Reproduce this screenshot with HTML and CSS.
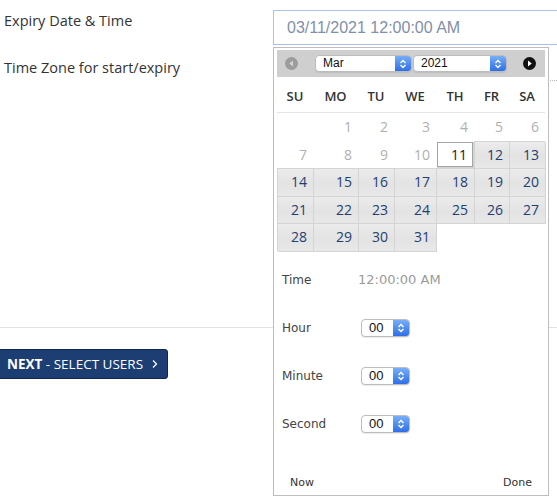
FILE: index.html
```html
<!DOCTYPE html>
<html>
<head>
<meta charset="utf-8">
<link rel="stylesheet" href="styles.css">
</head>
<body>
<div class="form">
  <div class="form-row row-expiry">
    <label class="lbl">Expiry Date &amp; Time</label>
    <div class="field"><input class="dt-input" type="text" value="03/11/2021 12:00:00 AM"></div>
  </div>
  <div class="form-row row-tz">
    <label class="lbl">Time Zone for start/expiry</label>
    <div class="field"><div class="tz-select"></div></div>
  </div>
</div>
<div class="divider"></div>
<div class="actions">
  <button class="next-btn"><b>NEXT</b> - SELECT USERS <svg class="chev" width="6" height="10" viewBox="0 0 6 10"><path d="M1 1.5 L4.5 5 L1 8.5" fill="none" stroke="#fff" stroke-width="1.3"/></svg></button>
</div>

<div class="picker">
  <div class="pk-header">
    <span class="nav prev"><svg width="13" height="13" viewBox="0 0 13 13"><circle cx="6.5" cy="6.5" r="6.5" fill="#9c9c9c"/><path d="M8 3.5 L4.2 6.5 L8 9.5 Z" fill="#d2d2d2"/></svg></span>
    <span class="mac-select sel-month"><span class="sel-text">Mar</span><span class="sel-btn"><svg width="8" height="12" viewBox="0 0 8 12"><path d="M1.5 5 L4 2.5 L6.5 5 M1.5 7 L4 9.5 L6.5 7" fill="none" stroke="#fff" stroke-width="1.4"/></svg></span></span>
    <span class="mac-select sel-year"><span class="sel-text">2021</span><span class="sel-btn"><svg width="8" height="12" viewBox="0 0 8 12"><path d="M1.5 5 L4 2.5 L6.5 5 M1.5 7 L4 9.5 L6.5 7" fill="none" stroke="#fff" stroke-width="1.4"/></svg></span></span>
    <span class="nav next"><svg width="13" height="13" viewBox="0 0 13 13"><circle cx="6.5" cy="6.5" r="6.5" fill="#111"/><path d="M5 3.5 L8.8 6.5 L5 9.5 Z" fill="#fff"/></svg></span>
  </div>
  <div class="dow">
    <span>SU</span><span>MO</span><span>TU</span><span>WE</span><span>TH</span><span>FR</span><span>SA</span>
  </div>
  <div class="days">
    <span class="d empty"></span>
    <span class="d off">1</span><span class="d off">2</span><span class="d off">3</span><span class="d off">4</span><span class="d off">5</span><span class="d off">6</span>
    <span class="d off">7</span><span class="d off">8</span><span class="d off">9</span><span class="d off">10</span>
    <span class="d cur">11</span><span class="d on">12</span><span class="d on">13</span>
    <span class="d on">14</span><span class="d on">15</span><span class="d on">16</span><span class="d on">17</span><span class="d on">18</span><span class="d on">19</span><span class="d on">20</span>
    <span class="d on">21</span><span class="d on">22</span><span class="d on">23</span><span class="d on">24</span><span class="d on">25</span><span class="d on">26</span><span class="d on">27</span>
    <span class="d on">28</span><span class="d on">29</span><span class="d on">30</span><span class="d on">31</span>
  </div>
  <div class="time">
    <div class="t-row"><span class="t-lbl">Time</span><span class="t-val">12:00:00 AM</span></div>
    <div class="t-row"><span class="t-lbl">Hour</span><span class="mac-select sel-small"><span class="sel-text">00</span><span class="sel-btn"><svg width="8" height="12" viewBox="0 0 8 12"><path d="M1.5 5 L4 2.5 L6.5 5 M1.5 7 L4 9.5 L6.5 7" fill="none" stroke="#fff" stroke-width="1.4"/></svg></span></span></div>
    <div class="t-row"><span class="t-lbl">Minute</span><span class="mac-select sel-small"><span class="sel-text">00</span><span class="sel-btn"><svg width="8" height="12" viewBox="0 0 8 12"><path d="M1.5 5 L4 2.5 L6.5 5 M1.5 7 L4 9.5 L6.5 7" fill="none" stroke="#fff" stroke-width="1.4"/></svg></span></span></div>
    <div class="t-row"><span class="t-lbl">Second</span><span class="mac-select sel-small"><span class="sel-text">00</span><span class="sel-btn"><svg width="8" height="12" viewBox="0 0 8 12"><path d="M1.5 5 L4 2.5 L6.5 5 M1.5 7 L4 9.5 L6.5 7" fill="none" stroke="#fff" stroke-width="1.4"/></svg></span></span></div>
  </div>
  <div class="pk-footer">
    <span class="pk-btn">Now</span>
    <span class="pk-btn">Done</span>
  </div>
</div>
</body>
</html>
```

FILE: styles.css
```css
* { box-sizing: border-box; }
html, body { margin: 0; padding: 0; background: #fff; }
body {
  width: 557px;
  height: 502px;
  overflow: hidden;
  position: relative;
  font-family: "Open Sans", sans-serif;
  color: #333;
}

.form { padding-top: 10px; }
.form-row {
  display: grid;
  grid-template-columns: 273px 1fr;
}
.lbl {
  padding-left: 4px;
  font-size: 14.5px;
  color: #333;
}
.row-expiry .lbl { line-height: 22px; }
.row-tz { margin-top: 11px; }
.row-tz .lbl { line-height: 24px; }

.dt-input {
  display: block;
  width: 300px;
  height: 35px;
  border: 1px solid #a9c3e6;
  padding: 0 0 0 13px;
  font-family: "Liberation Sans", sans-serif;
  font-size: 16px;
  color: #7f90a9;
  outline: none;
  background: #fff;
}
.tz-select {
  width: 300px;
  height: 25px;
  border-bottom: 1px dotted #bbb;
}

.divider {
  margin-top: 246px;
  height: 1px;
  background: #e2e2e2;
}
.actions { margin-top: 21px; }
.next-btn {
  margin-left: -3px;
  height: 30px;
  width: 171px;
  padding: 0 0 0 9px;
  display: flex;
  align-items: center;
  background: #1c3e72;
  border: 1px solid #0e2650;
  border-radius: 3px;
  color: #fff;
  font-family: "Open Sans", sans-serif;
  font-size: 13.5px;
  white-space: pre;
}
.next-btn b { font-weight: 700; }
.next-btn .chev { margin-left: 5px; }

/* picker */
.picker {
  position: absolute;
  left: 273px;
  top: 47px;
  width: 276px;
  height: 449px;
  background: #fff;
  border: 1px solid #bdbdbd;
  padding: 2px 3px 2px 3px;
  display: flex;
  flex-direction: column;
}
.pk-header {
  height: 27px;
  background: #cfcfcf;
  display: flex;
  align-items: center;
  padding-left: 8px;
}
.nav { display: flex; }
.prev { margin-right: 17px; }
.next { margin-left: 16px; }

.mac-select {
  display: flex;
  align-items: stretch;
  height: 17px;
  background: #fff;
  border: 1px solid #bcbcbc;
  border-radius: 4px;
  box-shadow: 0 1px 1px rgba(0,0,0,0.08);
  overflow: hidden;
  font-family: "Liberation Sans", sans-serif;
  font-size: 12px;
  color: #111;
}
.sel-text {
  flex: 1;
  padding-left: 7px;
  line-height: 15px;
}
.sel-btn {
  width: 16px;
  background: linear-gradient(#78adf8, #2d6fe8);
  display: flex;
  align-items: center;
  justify-content: center;
}
.sel-month { width: 97px; }
.sel-year { width: 94px; margin-left: 1px; }

.dow {
  display: grid;
  grid-template-columns: 36px 45px 36px 42px 38px 35px 36px;
  height: 36px;
  padding-top: 3px;
  line-height: 32px;
  border-bottom: 1px solid #e6e6e6;
  font-size: 13px;
  font-weight: 600;
  color: #333;
  text-align: center;
}

.days {
  display: grid;
  grid-template-columns: 36px 45px 36px 42px 38px 35px 36px;
  grid-auto-rows: 27.5px;
  font-size: 14px;
}
.d {
  display: flex;
  align-items: center;
  justify-content: flex-end;
  padding-right: 6px;
}
.off { color: #b0b0b0; }
.on {
  color: #223f70;
  background: linear-gradient(#ececec, #e3e3e3 55%, #e8e8e8);
  box-shadow: inset 1px 1px 0 #d4d4d4, 1px 1px 0 #d4d4d4;
}
.cur {
  color: #222;
  background: #fff;
  border: 1px solid #a5a5a5;
  margin: 1px;
  padding-right: 5px;
  box-shadow: 1px 1px 0 1px #d4d4d4;
}

.time {
  margin-top: 5px;
  font-family: "DejaVu Sans", sans-serif;
  font-size: 12px;
  color: #444;
}
.t-row {
  height: 48px;
  display: flex;
  align-items: center;
  padding-left: 5px;
}
.t-lbl { width: 76px; }
.t-val {
  font-size: 13px;
  color: #9a9a9a;
}
.sel-small {
  width: 49px;
  height: 18px;
  margin-left: 3px;
  font-size: 13px;
}
.sel-small .sel-text { line-height: 16px; padding-left: 7px; }

.pk-footer {
  margin-top: auto;
  display: flex;
  justify-content: space-between;
  padding: 0 13px 0 13px;
  font-family: "DejaVu Sans", sans-serif;
  font-size: 11px;
  color: #333;
  line-height: 20px;
}
```
